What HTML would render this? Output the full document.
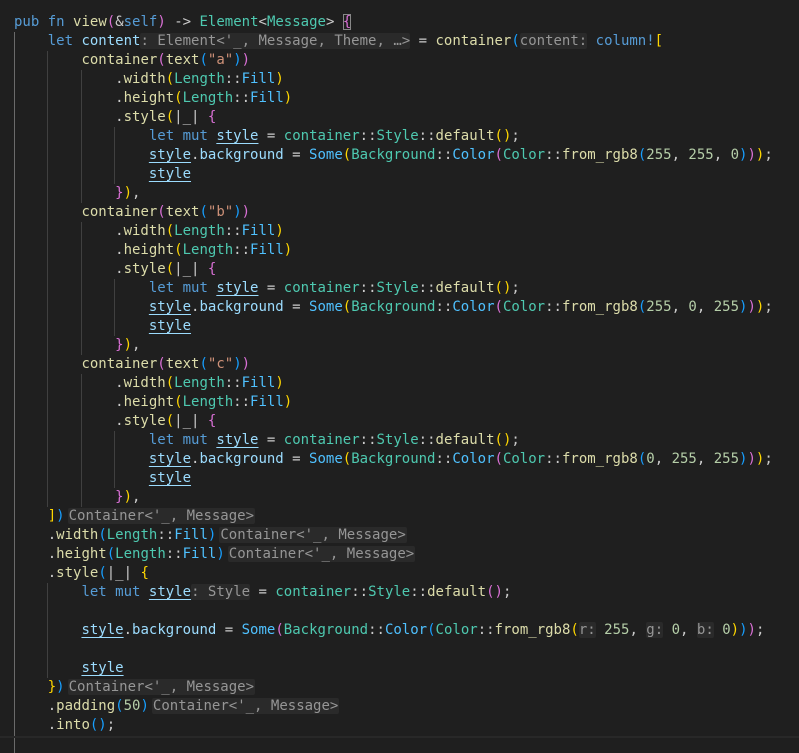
<!DOCTYPE html>
<html><head><meta charset="utf-8"><style>
html,body{margin:0;padding:0;background:#1f1f1f;width:799px;height:749px;overflow:hidden}
#c{position:absolute;left:14px;top:12.5px;font-family:"DejaVu Sans Mono","Liberation Mono",monospace;font-size:14px;line-height:19px;color:#cccccc}
.l{height:19px;white-space:pre}
.k{color:#569cd6}.f{color:#dcdcaa}.t{color:#4ec9b0}.e{color:#4fc1ff}.v{color:#9cdcfe}.n{color:#b5cea8}.s{color:#ce9178}
.y{color:#ffd700}.p{color:#da70d6}.b{color:#179fff}
.h{color:#969696;background:#2a2a2a;border-radius:2px}
.hm{margin-left:3px;padding:0 1px}
.u{text-decoration:underline;text-decoration-color:#9cdcfe;text-underline-offset:3px}
.box{outline:1px solid #888;outline-offset:-1px}
.g{position:absolute;width:1px;background:#404040}
</style></head><body>
<div class="g" style="left:14px;top:31.5px;height:721px;background:#6a6a6a"></div>
<div class="g" style="left:47px;top:50.5px;height:456px"></div>
<div class="g" style="left:47px;top:582.5px;height:95px"></div>
<div class="g" style="left:81px;top:69.5px;height:133px"></div>
<div class="g" style="left:81px;top:221.5px;height:133px"></div>
<div class="g" style="left:81px;top:373.5px;height:133px"></div>
<div class="g" style="left:114px;top:126.5px;height:57px"></div>
<div class="g" style="left:114px;top:278.5px;height:57px"></div>
<div class="g" style="left:114px;top:430.5px;height:57px"></div>
<div style="position:absolute;left:0;top:736px;width:799px;height:2px;background:#282828"></div>
<div id="c"><div class="l"><span class="k">pub</span> <span class="k">fn</span> <span class="f">view</span><span class="p">(</span>&amp;<span class="k">self</span><span class="p">)</span> -&gt; <span class="t">Element</span>&lt;<span class="t">Message</span>&gt; <span class="p box">{</span></div>
<div class="l">    <span class="k">let</span> <span class="v">content</span><span class="h">: Element&lt;'_, Message, Theme, …&gt;</span> = <span class="f">container</span><span class="b">(</span><span class="h">content:</span> <span class="k">column!</span><span class="y">[</span></div>
<div class="l">        <span class="f">container</span><span class="p">(</span><span class="f">text</span><span class="b">(</span><span class="s">"a"</span><span class="b">)</span><span class="p">)</span></div>
<div class="l">            .<span class="f">width</span><span class="y">(</span><span class="t">Length</span>::<span class="e">Fill</span><span class="y">)</span></div>
<div class="l">            .<span class="f">height</span><span class="y">(</span><span class="t">Length</span>::<span class="e">Fill</span><span class="y">)</span></div>
<div class="l">            .<span class="f">style</span><span class="y">(</span>|_| <span class="p">{</span></div>
<div class="l">                <span class="k">let</span> <span class="k">mut</span> <span class="v u">style</span> = <span class="t">container</span>::<span class="t">Style</span>::<span class="f">default</span><span class="y">()</span>;</div>
<div class="l">                <span class="v u">style</span>.<span class="v">background</span> = <span class="e">Some</span><span class="y">(</span><span class="t">Background</span>::<span class="e">Color</span><span class="p">(</span><span class="t">Color</span>::<span class="f">from_rgb8</span><span class="b">(</span><span class="n">255</span>, <span class="n">255</span>, <span class="n">0</span><span class="b">)</span><span class="p">)</span><span class="y">)</span>;</div>
<div class="l">                <span class="v u">style</span></div>
<div class="l">            <span class="p">}</span><span class="y">)</span>,</div>
<div class="l">        <span class="f">container</span><span class="p">(</span><span class="f">text</span><span class="b">(</span><span class="s">"b"</span><span class="b">)</span><span class="p">)</span></div>
<div class="l">            .<span class="f">width</span><span class="y">(</span><span class="t">Length</span>::<span class="e">Fill</span><span class="y">)</span></div>
<div class="l">            .<span class="f">height</span><span class="y">(</span><span class="t">Length</span>::<span class="e">Fill</span><span class="y">)</span></div>
<div class="l">            .<span class="f">style</span><span class="y">(</span>|_| <span class="p">{</span></div>
<div class="l">                <span class="k">let</span> <span class="k">mut</span> <span class="v u">style</span> = <span class="t">container</span>::<span class="t">Style</span>::<span class="f">default</span><span class="y">()</span>;</div>
<div class="l">                <span class="v u">style</span>.<span class="v">background</span> = <span class="e">Some</span><span class="y">(</span><span class="t">Background</span>::<span class="e">Color</span><span class="p">(</span><span class="t">Color</span>::<span class="f">from_rgb8</span><span class="b">(</span><span class="n">255</span>, <span class="n">0</span>, <span class="n">255</span><span class="b">)</span><span class="p">)</span><span class="y">)</span>;</div>
<div class="l">                <span class="v u">style</span></div>
<div class="l">            <span class="p">}</span><span class="y">)</span>,</div>
<div class="l">        <span class="f">container</span><span class="p">(</span><span class="f">text</span><span class="b">(</span><span class="s">"c"</span><span class="b">)</span><span class="p">)</span></div>
<div class="l">            .<span class="f">width</span><span class="y">(</span><span class="t">Length</span>::<span class="e">Fill</span><span class="y">)</span></div>
<div class="l">            .<span class="f">height</span><span class="y">(</span><span class="t">Length</span>::<span class="e">Fill</span><span class="y">)</span></div>
<div class="l">            .<span class="f">style</span><span class="y">(</span>|_| <span class="p">{</span></div>
<div class="l">                <span class="k">let</span> <span class="k">mut</span> <span class="v u">style</span> = <span class="t">container</span>::<span class="t">Style</span>::<span class="f">default</span><span class="y">()</span>;</div>
<div class="l">                <span class="v u">style</span>.<span class="v">background</span> = <span class="e">Some</span><span class="y">(</span><span class="t">Background</span>::<span class="e">Color</span><span class="p">(</span><span class="t">Color</span>::<span class="f">from_rgb8</span><span class="b">(</span><span class="n">0</span>, <span class="n">255</span>, <span class="n">255</span><span class="b">)</span><span class="p">)</span><span class="y">)</span>;</div>
<div class="l">                <span class="v u">style</span></div>
<div class="l">            <span class="p">}</span><span class="y">)</span>,</div>
<div class="l">    <span class="y">]</span><span class="b">)</span><span class="h hm">Container&lt;'_, Message&gt;</span></div>
<div class="l">    .<span class="f">width</span><span class="b">(</span><span class="t">Length</span>::<span class="e">Fill</span><span class="b">)</span><span class="h hm">Container&lt;'_, Message&gt;</span></div>
<div class="l">    .<span class="f">height</span><span class="b">(</span><span class="t">Length</span>::<span class="e">Fill</span><span class="b">)</span><span class="h hm">Container&lt;'_, Message&gt;</span></div>
<div class="l">    .<span class="f">style</span><span class="b">(</span>|_| <span class="y">{</span></div>
<div class="l">        <span class="k">let</span> <span class="k">mut</span> <span class="v u">style</span><span class="h">: Style</span> = <span class="t">container</span>::<span class="t">Style</span>::<span class="f">default</span><span class="p">()</span>;</div>
<div class="l"> </div>
<div class="l">        <span class="v u">style</span>.<span class="v">background</span> = <span class="e">Some</span><span class="p">(</span><span class="t">Background</span>::<span class="e">Color</span><span class="b">(</span><span class="t">Color</span>::<span class="f">from_rgb8</span><span class="y">(</span><span class="h">r:</span> <span class="n">255</span>, <span class="h">g:</span> <span class="n">0</span>, <span class="h">b:</span> <span class="n">0</span><span class="y">)</span><span class="b">)</span><span class="p">)</span>;</div>
<div class="l"> </div>
<div class="l">        <span class="v u">style</span></div>
<div class="l">    <span class="y">}</span><span class="b">)</span><span class="h hm">Container&lt;'_, Message&gt;</span></div>
<div class="l">    .<span class="f">padding</span><span class="b">(</span><span class="n">50</span><span class="b">)</span><span class="h hm">Container&lt;'_, Message&gt;</span></div>
<div class="l">    .<span class="f">into</span><span class="b">()</span>;</div></div>
</body></html>
